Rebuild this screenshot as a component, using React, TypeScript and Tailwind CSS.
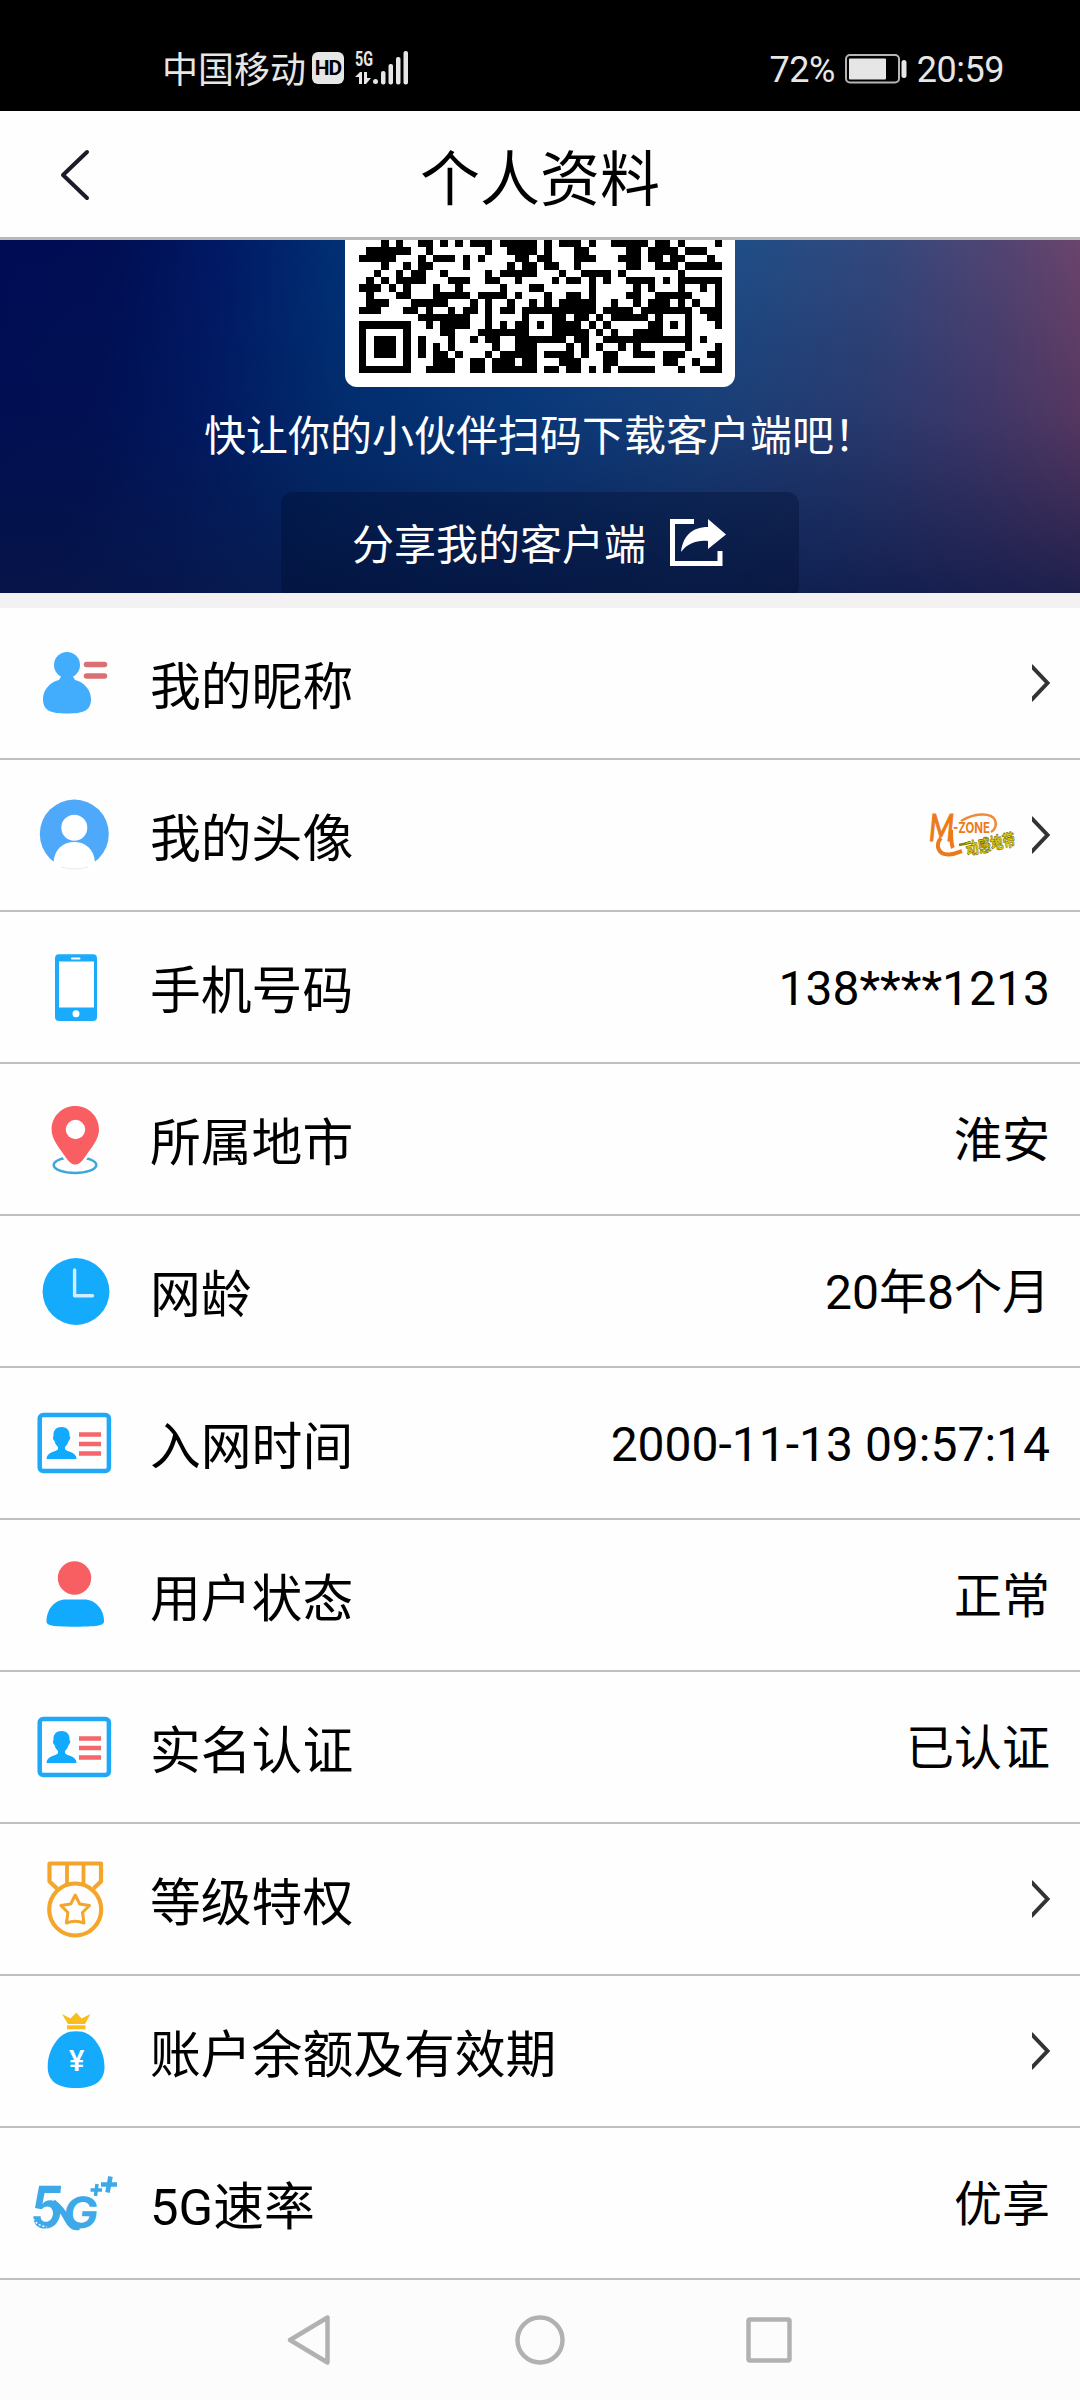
import React from 'react';

interface RowProps {
    icon: React.ReactNode;
    label: string;
    value?: string;
    extra?: React.ReactNode;
    arrow?: boolean;
}

// Dark runs of every module row, as [first column, column after the last]
const QR_ROWS: number[][][] = [
    [[3, 4], [5, 6], [8, 10], [11, 12], [13, 14], [15, 18], [19, 24], [25, 26], [27, 30], [31, 32], [34, 39], [40, 42], [43, 44], [48, 49]],
    [[1, 7], [9, 10], [17, 18], [20, 24], [25, 26], [29, 31], [36, 38], [39, 43], [44, 47]],
    [[0, 5], [8, 9], [10, 13], [14, 15], [16, 17], [21, 23], [24, 26], [29, 32], [35, 38], [39, 41], [42, 44], [47, 48]],
    [[3, 4], [6, 7], [8, 10], [14, 15], [20, 21], [22, 24], [25, 27], [29, 30], [36, 38], [40, 43], [44, 49]],
    [[2, 3], [5, 6], [7, 9], [11, 12], [17, 18], [19, 24], [27, 28], [30, 34], [35, 36], [43, 44]],
    [[1, 2], [3, 4], [5, 9], [12, 15], [17, 19], [21, 22], [26, 27], [28, 30], [31, 32], [33, 34], [36, 40], [41, 42], [43, 49]],
    [[0, 3], [4, 5], [6, 7], [10, 11], [13, 14], [19, 20], [23, 25], [31, 32], [37, 38], [39, 40], [43, 44], [46, 47], [48, 49]],
    [[1, 2], [5, 7], [10, 15], [16, 20], [21, 22], [25, 26], [28, 30], [31, 32], [36, 38], [40, 45], [48, 49]],
    [[1, 4], [7, 12], [15, 16], [17, 18], [20, 21], [23, 24], [25, 26], [27, 32], [34, 35], [37, 38], [39, 42], [43, 44], [45, 46], [48, 49]],
    [[0, 3], [6, 8], [9, 10], [12, 13], [14, 16], [17, 18], [19, 21], [22, 32], [33, 37], [38, 45], [46, 49]],
    [[8, 15], [17, 18], [22, 23], [26, 28], [29, 31], [32, 33], [34, 39], [40, 41], [44, 45], [47, 49]],
    [[0, 7], [9, 10], [11, 15], [17, 18], [19, 20], [21, 23], [24, 25], [26, 30], [31, 32], [33, 34], [39, 41], [42, 43], [44, 45], [48, 49]],
    [[0, 1], [6, 7], [11, 13], [16, 23], [26, 31], [32, 33], [34, 35], [37, 41], [44, 45]],
    [[0, 1], [2, 5], [6, 7], [8, 9], [12, 13], [15, 16], [17, 19], [21, 28], [29, 31], [33, 45], [46, 47]],
    [[0, 1], [2, 5], [6, 7], [8, 9], [10, 11], [12, 13], [18, 19], [21, 24], [28, 29], [30, 31], [32, 33], [35, 36], [37, 38], [44, 45], [48, 49]],
    [[0, 1], [2, 5], [6, 7], [8, 9], [10, 12], [13, 14], [17, 18], [19, 24], [25, 29], [30, 31], [33, 35], [37, 40], [41, 44], [47, 49]],
    [[0, 1], [6, 7], [10, 13], [15, 17], [18, 21], [22, 24], [27, 30], [33, 35], [41, 43], [45, 46], [48, 49]],
    [[0, 7], [9, 13], [15, 17], [18, 24], [25, 27], [28, 30], [31, 32], [33, 34], [35, 40], [43, 44], [46, 49]],
];

const QrCode = () => (
    <svg className="w-[363px] h-[133px]" viewBox="0 0 49 18" preserveAspectRatio="none" shapeRendering="crispEdges">
        {QR_ROWS.map((runs, y) =>
            runs.map(([from, to]) => <rect key={`${y}-${from}`} x={from} y={y} width={to - from} height="1" />)
        )}
    </svg>
);

const Icon = ({ children }: { children: React.ReactNode }) => (
    <svg className="w-[100px] h-[100px] shrink-0 overflow-visible" viewBox="0 0 100 100" fill="none">
        {children}
    </svg>
);

const NicknameIcon = () => (
    <Icon>
        <g fill="#41adfc">
            <circle cx="43" cy="32" r="13" />
            <path d="M38 42H48L51 47C60 49 67 57 67 66C67 78 59 80.5 43 80.5C27 80.5 19 78 19 66C19 57 26 49 35 47Z" />
        </g>
        <path d="M62.5 31.6H80.500M62.500 43H80.500" stroke="#dc6f72" strokeWidth="5.500" strokeLinecap="round" />
    </Icon>
);

const AvatarIcon = () => (
    <Icon>
        <circle cx="50.3" cy="49" r="34.500" fill="#4ea9fa" />
        <circle cx="50.3" cy="42.700" r="13" fill="#fff" />
        <path d="M29.500 85V77C30.500 64 39 57 50.300 57C61.500 57 70 64 71 77V85Z" fill="#fff" />
        <path d="M37 82Q50 86 64 82" stroke="#e9e9e9" strokeWidth="1" />
    </Icon>
);

const PhoneIcon = () => (
    <Icon>
        <rect x="31" y="17.300" width="42" height="66.700" rx="4" fill="#1aabfd" />
        <rect x="35" y="24.500" width="35" height="46" fill="#fff" />
        <path d="M48 21.500H55.500" stroke="#fff" strokeWidth="2" strokeLinecap="round" />
        <circle cx="52" cy="76.800" r="3.500" fill="#fff" />
    </Icon>
);

const LocationIcon = () => (
    <Icon>
        <ellipse cx="51" cy="76" rx="21.300" ry="8" stroke="#3ea6dd" strokeWidth="2.500" />
        <path
            d="M51.300 17C64.500 17 75 27.500 75 40.500C75 50 68 58 61 68C57 74 54 75.500 51.300 75.500C48.500 75.500 45.500 74 41.500 68C34.500 58 27.600 50 27.600 40.500C27.600 27.500 38 17 51.300 17Z"
            fill="#f95f62"
            stroke="#fff"
            strokeWidth="5"
            paintOrder="stroke"
        />
        <circle cx="51.500" cy="40.500" r="9.700" fill="#fff" />
    </Icon>
);

const ClockIcon = () => (
    <Icon>
        <circle cx="52" cy="50.500" r="33.400" fill="#14abfd" />
        <path d="M50.600 29V54.700H68.500" stroke="#cfeeff" strokeWidth="3.400" strokeLinecap="round" strokeLinejoin="round" />
    </Icon>
);

const IdCardIcon = () => (
    <Icon>
        <rect x="15.700" y="22" width="69.200" height="56" rx="3.500" stroke="#1fa8f5" strokeWidth="4.500" />
        <path
            d="M37.500 34C43.500 34 46 38 45.500 43C47 44 46 47 44.500 48C44 51 42 53 41 54V56C42 59 52.500 58.500 52.500 66H22.500C22.500 58.500 33 59 34 56V54C33 53 31 51 30.500 48C29 47 28.500 44 29.500 43C29 38 31.500 34 37.500 34Z"
            fill="#12aaff"
        />
        <path d="M55 41.500H77M55 51H77M55 60.500H77" stroke="#f2686c" strokeWidth="4.500" />
    </Icon>
);

const UserIcon = () => (
    <Icon>
        <circle cx="50.500" cy="33" r="16.700" fill="#f85f62" />
        <path d="M42 54.500H60C72 54.500 80 65 80 76C80 80 77 81.700 51 81.700C25 81.700 22.500 80 22.500 76C22.500 65 30 54.500 42 54.500Z" fill="#12aaff" />
    </Icon>
);

const MedalIcon = () => (
    <Icon>
        <g stroke="#f4a52b" strokeWidth="4.200" strokeLinejoin="round">
            <path d="M33 39.500L25.500 32.500V14.500H77V32.500L69.500 39.500" />
            <path d="M43 15V35M59.500 15V35" strokeWidth="3.800" />
            <circle cx="51.200" cy="60.500" r="26" />
            <path d="M51.200 46L55.700 55L65.500 56.500L58.500 63.500L60 74Q51.200 70.500 42.400 74L43.900 63.500L36.900 56.500L46.700 55Z" strokeWidth="3" />
        </g>
    </Icon>
);

const MoneyBagIcon = () => (
    <Icon>
        <path d="M38 13L46.500 17.500L52.300 11.500L57.500 17.500L66.500 13L61 23H44Z" fill="#f9be1c" />
        <path d="M43 26.300H61.500" stroke="#f9be1c" strokeWidth="4" />
        <path d="M52 30.300C59 30.300 65 32 70 38C76 45 80.500 54 80.500 66C80.500 79 72 87 52 87C32 87 23.700 79 23.700 66C23.700 54 28 45 34 38C39 32 45 30.300 52 30.300Z" fill="#14abfd" />
        <text x="52.700" y="69.500" textAnchor="middle" fontFamily="Roboto, sans-serif" fontSize="29" fontWeight="500" fill="#fff">¥</text>
    </Icon>
);

const FiveGIcon = () => (
    <Icon>
        <g fontFamily="Inter, Roboto, sans-serif" fontWeight="700" fill="#3ea9e9" transform="skewX(-6)">
            <text x="13" y="75" fontSize="58" textLength="32" lengthAdjust="spacingAndGlyphs">5</text>
            <text x="46" y="75" fontSize="43" textLength="35" lengthAdjust="spacingAndGlyphs">G</text>
        </g>
        <path d="M29 49Q38 56 43 66T55 74" stroke="#3ea9e9" strokeWidth="6" />
        <path d="M9 66Q14 73 23 74" stroke="#fff" strokeWidth="1.500" strokeDasharray="2 2" />
        <path d="M66.500 37H78M73 31L71.500 43" stroke="#3ea9e9" strokeWidth="3.500" />
        <path d="M77 31.500H93M86.500 23.500L83.500 39.500" stroke="#3ea9e9" strokeWidth="4.600" />
    </Icon>
);

const MZoneLogo = () => (
    <svg className="w-[90px] h-[50px] mr-[13px] overflow-visible" viewBox="0 0 90 50" fill="none">
        <text x="0" y="31" fontFamily="Lato, sans-serif" fontStyle="italic" fontSize="37" fill="#ec7a1c" stroke="#ec7a1c" strokeWidth="1.200" textLength="25" lengthAdjust="spacingAndGlyphs">M</text>
        <path d="M22 20C22 28 22 34 24 38M12 28C6 35 9 45 20 44.500C26 44.500 30 42 33 41" stroke="#ec7a1c" strokeWidth="4" />
        <path d="M32 11C45 3 62 2 66 10C68 15 66 20 62 22" stroke="#ef8a3a" strokeWidth="2.500" />
        <text x="24" y="23" fontFamily="Inter, sans-serif" fontSize="15" fontWeight="700" fill="#ec7a1c" textLength="37" lengthAdjust="spacingAndGlyphs">-ZONE</text>
        <g transform="rotate(-12 36 44)">
            <path d="M32 34H43" stroke="#8a8200" strokeWidth="2.500" />
            <text x="38" y="46" fontFamily="'Noto Sans CJK SC', sans-serif" fontSize="17" fontWeight="700" fill="#e8d200" stroke="#6b6410" strokeWidth=".6" textLength="50" lengthAdjust="spacingAndGlyphs">动感地带</text>
        </g>
    </svg>
);

const ChevronRight = () => (
    <svg className="w-[18px] h-[38px]" viewBox="0 0 18 38" fill="none">
        <path d="M-1 1.500L15.500 19L-1 36.500" stroke="#333" strokeWidth="4" />
    </svg>
);

const ProfileRow: React.FC<RowProps> = ({ icon, label, value, extra, arrow }) => (
    <div className="h-[152px] border-b-2 border-[#bfbfbf] flex items-center pl-6 pr-[30px]">
        {icon}
        <span className="ml-[26px] pt-[10px] text-[50.8px] leading-none whitespace-nowrap">{label}</span>
        <div className="ml-auto flex items-center">
            {value && <span className="pt-1 text-[48px] leading-none whitespace-nowrap">{value}</span>}
            {extra}
            {arrow && <ChevronRight />}
        </div>
    </div>
);

const StatusBar = () => (
    <div className="h-[111px] bg-black text-[#e6e6e6] flex items-center justify-between pt-[27px] pl-[162px] pr-[76px] text-[36px] leading-none">
        <div className="flex items-center">
            <span className="pt-[3px]">中国移动</span>
            <span className="ml-1.5 mt-[-2px] w-8 h-8 rounded-md bg-[#e6e6e6] text-black text-[21px] leading-8 font-bold text-center tracking-[-1px]">HD</span>
            <svg className="ml-[11px] mt-[-3px] w-[54px] h-[36px] overflow-visible" viewBox="0 0 54 36" fill="#e6e6e6">
                <text x="0" y="16" fontFamily="Roboto, sans-serif" fontSize="20" fontWeight="700" textLength="18" lengthAdjust="spacingAndGlyphs">5G</text>
                <path d="M0 27L5 22H7V34H4V27ZM9 22H12V28H16L11 34H9Z" />
                <circle cx="20.500" cy="31.500" r="2.500" />
                <rect x="26" y="21" width="4.500" height="13.500" rx="2" />
                <rect x="33.500" y="14" width="4.500" height="20.500" rx="2" />
                <rect x="41" y="7" width="4.500" height="27.500" rx="2" />
                <rect x="48.500" y="1" width="4.500" height="33.500" rx="2" />
            </svg>
        </div>
        <div className="flex items-center">
            <span className="pt-[2px] tracking-[-0.5px]">72%</span>
            <svg className="ml-2.5 w-[62px] h-[30px]" viewBox="0 0 62 30" fill="none">
                <rect x="1" y="1" width="53" height="27.500" rx="4" stroke="#b5b5b5" strokeWidth="2" />
                <rect x="4" y="4.500" width="37" height="21" rx="1" fill="#e6e6e6" />
                <rect x="56.500" y="6" width="5" height="18" rx="2.500" fill="#e6e6e6" />
            </svg>
            <span className="ml-2.5 pt-[2px] tracking-[-0.5px]">20:59</span>
        </div>
    </div>
);

const Header = () => (
    <div className="relative h-[129px] border-b-[3px] border-[#b9b9bc] bg-[#fefefe] flex items-center justify-center">
        <svg className="absolute left-[58px] top-[37px] w-[34px] h-[54px]" viewBox="0 0 34 54" fill="none">
            <path d="M29 4L5 27L29 50" stroke="#1d1a29" strokeWidth="4" strokeLinecap="round" strokeLinejoin="round" />
        </svg>
        <h1 className="pt-3.5 text-[60px] leading-none">个人资料</h1>
    </div>
);

const ShareBanner = () => (
    <div className="h-[353px] overflow-hidden flex flex-col items-center text-white text-[42px] leading-none bg-[linear-gradient(to_bottom,rgba(4,20,76,0)_0%,rgba(4,20,76,0.28)_50%,rgba(8,22,70,0.8)_100%),linear-gradient(99deg,#000c54_0%,#000e54_10%,#001a66_20%,#003478_32%,#0a4488_48%,#1e4e88_64%,#34487c_78%,#544472_89%,#7c4466_100%)]">
        <div className="w-[390px] h-[147px] shrink-0 rounded-b-xl bg-white flex justify-center">
            <QrCode />
        </div>
        <p className="mt-[29px] whitespace-nowrap">快让你的小伙伴扫码下载客户端吧！</p>
        <div className="mt-[34px] w-[518px] h-[106px] shrink-0 rounded-xl bg-[#000c2c]/35 flex items-start pt-[26px] pl-[71px]">
            <span className="pt-[7px] whitespace-nowrap">分享我的客户端</span>
            <svg className="ml-[23px] w-[60px] h-[50px]" viewBox="0 0 60 50" fill="none">
                <path d="M25 3.500H3.500V45.500H51V33" stroke="#fff" strokeWidth="5" />
                <path d="M39 1L57 16.500L39 31V23C28 22 19 25 12 34C14 18 23 9 39 9Z" fill="#fff" />
            </svg>
        </div>
    </div>
);

const NavBar = () => (
    <div className="h-[120px] bg-[#fcfcfc]">
        <svg className="w-full h-full" viewBox="0 0 1080 120" fill="none" stroke="#b1b1b1" strokeWidth="4.500" strokeLinejoin="round">
            <path d="M290 60L327.500 37.500V82.500Z" />
            <circle cx="540" cy="60" r="22.500" />
            <rect x="748.500" y="39.500" width="41" height="41" rx="1.500" />
        </svg>
    </div>
);

const App = () => {
    return (
        <div className="w-[1080px] h-[2400px] overflow-hidden bg-[#fefefe] text-black font-[Roboto,'Noto_Sans_CJK_SC',sans-serif]">
            <StatusBar />
            <Header />
            <ShareBanner />
            <div className="h-[15px] bg-[#f3f1f2]"></div>

            <ProfileRow icon={<NicknameIcon />} label="我的昵称" arrow />
            <ProfileRow icon={<AvatarIcon />} label="我的头像" extra={<MZoneLogo />} arrow />
            <ProfileRow icon={<PhoneIcon />} label="手机号码" value="138****1213" />
            <ProfileRow icon={<LocationIcon />} label="所属地市" value="淮安" />
            <ProfileRow icon={<ClockIcon />} label="网龄" value="20年8个月" />
            <ProfileRow icon={<IdCardIcon />} label="入网时间" value="2000-11-13 09:57:14" />
            <ProfileRow icon={<UserIcon />} label="用户状态" value="正常" />
            <ProfileRow icon={<IdCardIcon />} label="实名认证" value="已认证" />
            <ProfileRow icon={<MedalIcon />} label="等级特权" arrow />
            <ProfileRow icon={<MoneyBagIcon />} label="账户余额及有效期" arrow />
            <ProfileRow icon={<FiveGIcon />} label="5G速率" value="优享" />

            <NavBar />
        </div>
    );
};

export default App;
